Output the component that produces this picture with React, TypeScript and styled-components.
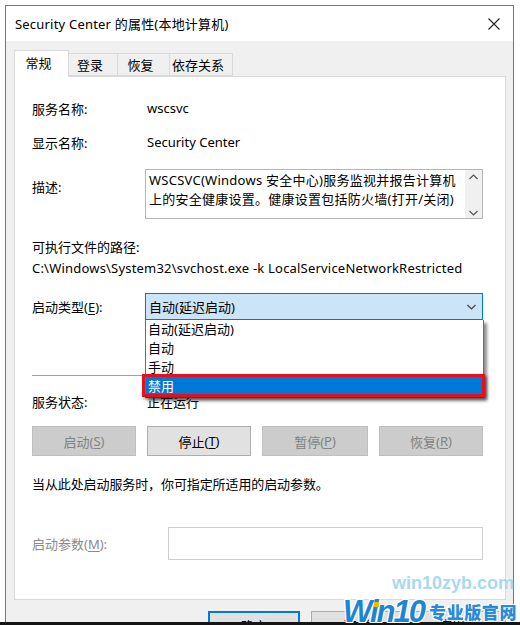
import React from "react";
import styled, { createGlobalStyle } from "styled-components";

const Global = createGlobalStyle`
  html, body { margin: 0; padding: 0; background: #fff; }
  body {
    width: 520px; height: 625px; overflow: hidden;
    font-family: "Noto Sans", "Noto Sans CJK SC", sans-serif;
    font-size: 13px; color: #000;
  }
`;

const Screen = styled.div`
  width: 520px; height: 625px; position: relative; overflow: hidden;
  display: flex; flex-direction: column;
`;

const Frame = styled.div`
  flex: 1; min-height: 0;
  margin: 5px 6px 0 5px;
  border: 1px solid #2f86dd; border-bottom: none;
  background: #f0f0f0;
  display: flex; flex-direction: column; overflow: hidden;
`;

const BottomEdge = styled.div`
  height: 3px; background: #151515; flex: none;
`;

const TitleBar = styled.div`
  height: 35px; flex: none; background: #fff;
  display: flex; align-items: center; justify-content: space-between;
  padding: 0 13px 0 9px;
`;

const TitleText = styled.span`
  font-size: 13px; letter-spacing: 0.2px;
`;

const Body = styled.div`
  padding: 9px 0 0 8px;
  display: flex; flex-direction: column;
`;

const TabStrip = styled.div`
  display: flex; align-items: flex-end; height: 26px; position: relative; z-index: 1;
`;

const Tab = styled.div<{ $active?: boolean; $w: number }>`
  width: ${(p) => p.$w}px;
  height: ${(p) => (p.$active ? 27 : 23)}px;
  box-sizing: border-box;
  border: 1px solid #d9d9d9;
  border-bottom: ${(p) => (p.$active ? "none" : "1px solid #d9d9d9")};
  border-left: ${(p) => (p.$active ? "1px solid #d9d9d9" : "none")};
  margin-bottom: ${(p) => (p.$active ? -1 : 0)}px;
  background: ${(p) => (p.$active ? "#fff" : "#f0f0f0")};
  display: flex; align-items: center; justify-content: center;
  padding-right: 6px; padding-bottom: ${(p) => (p.$active ? 3 : 0)}px;
  font-size: 13px;
`;

const Panel = styled.div`
  width: 492px; height: 524px; box-sizing: border-box;
  border: 1px solid #d9d9d9; background: #fff;
  padding: 22px 22px 0 17px;
  display: flex; flex-direction: column;
`;

const InfoRow = styled.div<{ $mt?: number }>`
  display: flex; align-items: center; height: 18px;
  margin-top: ${(p) => p.$mt ?? 0}px;
`;

const Label = styled.span<{ $w?: number; $disabled?: boolean }>`
  width: ${(p) => p.$w ?? 113}px; flex: none;
  color: ${(p) => (p.$disabled ? "#8a8a8a" : "#000")};
`;

const Value = styled.span`
  padding-left: 2px;
`;

const DescRow = styled.div`
  display: flex; align-items: flex-start; margin-top: 18px;
`;

const DescLabel = styled(Label)`
  padding-top: 8px;
`;

const DescBox = styled.div`
  flex: 1; height: 50px; box-sizing: border-box;
  border: 1px solid #b5b5b5;
  display: flex;
`;

const DescText = styled.div`
  flex: 1; padding: 1px 0 0 3px; line-height: 19px; font-size: 13px;
  letter-spacing: 0.25px; overflow: hidden; white-space: nowrap;
`;

const ScrollCol = styled.div`
  width: 17px; background: #f0f0f0; display: flex; flex-direction: column;
  justify-content: space-between; align-items: center; padding: 4px 0 2px;
`;

const PathLabel = styled.div`
  margin-top: 17px; line-height: 23px;
`;

const PathText = styled.div`
  line-height: 18px; letter-spacing: 0.2px; white-space: nowrap;
`;

const ComboRow = styled.div`
  display: flex; align-items: center; margin-top: 16px;
`;

const ComboWrap = styled.div`
  flex: 1; position: relative; height: 27px;
`;

const Combo = styled.div`
  height: 27px; box-sizing: border-box;
  border: 1px solid #0078d7; background: #cce4f7;
  display: flex; align-items: center; justify-content: space-between;
  padding: 0 6px 0 3px;
`;

const DropList = styled.div`
  position: absolute; left: 0; right: -1px; top: 27px; z-index: 5;
  box-sizing: border-box; border: 1px solid #1e80d8; border-top: none;
  background: #fff;
  box-shadow: 3px 3px 3px rgba(0, 0, 0, 0.45);
  padding-bottom: 1px;
`;

const DropItem = styled.div<{ $sel?: boolean }>`
  height: 19px; line-height: 19px; padding-left: 2px;
  background: ${(p) => (p.$sel ? "#0078d7" : "transparent")};
  color: ${(p) => (p.$sel ? "#fff" : "#000")};
`;

const RedMark = styled.div`
  position: absolute; left: -4px; right: -2px; top: 54px; height: 23px;
  border: 3px solid #e5101c; box-sizing: border-box; pointer-events: none;
  box-shadow: 2px 2px 3px rgba(0, 0, 0, 0.5);
`;

const Separator = styled.div`
  height: 1px; background: #a0a0a0; margin-top: 55px;
`;

const ButtonRow = styled.div`
  display: flex; justify-content: space-between; margin-top: 16px;
`;

const Btn = styled.div<{ $disabled?: boolean; $w?: number }>`
  width: ${(p) => p.$w ?? 104}px; height: 30px; box-sizing: border-box;
  border: 1px solid ${(p) => (p.$disabled ? "#bfbfbf" : "#adadad")};
  background: ${(p) => (p.$disabled ? "#cccccc" : "#e1e1e1")};
  color: ${(p) => (p.$disabled ? "#838383" : "#000")};
  display: flex; align-items: center; justify-content: center;
`;

const Note = styled.div`
  margin-top: 19px; line-height: 18px; letter-spacing: -0.1px;
`;

const ParamRow = styled.div`
  display: flex; align-items: center; margin-top: 34px;
`;

const ParamInput = styled.div`
  flex: 1; height: 33px; box-sizing: border-box; border: 1px solid #cfcfcf;
`;

const Footer = styled.div`
  display: flex; justify-content: flex-end; gap: 11px;
  width: 492px; margin-top: 11px;
`;

const FootBtn = styled.div<{ $primary?: boolean }>`
  width: 92px; height: 24px; box-sizing: border-box;
  border: ${(p) => (p.$primary ? "2px solid #0078d7" : "1px solid #adadad")};
  background: #e1e1e1;
  display: flex; align-items: flex-start; justify-content: center; padding-top: 3px;
`;

const SiteMark = styled.div`
  position: absolute; left: 392px; top: 573px; z-index: 10;
  font-family: "Liberation Sans", Arial, sans-serif; font-weight: bold;
  font-size: 18px; line-height: 21px; color: #a9d9f0;
`;

const LogoMark = styled.div`
  position: absolute; left: 343px; top: 594px; z-index: 10; height: 36px;
  display: flex; align-items: center; gap: 5px;
`;

const LogoWin = styled.span`
  font-family: "Liberation Sans", Arial, sans-serif; font-style: italic; font-weight: bold;
  font-size: 31px; line-height: 36px; letter-spacing: -2px;
  color: #1f84d4;
  text-shadow: 1px 1px 0 #fff, -1px -1px 0 #fff, 1px -1px 0 #fff, -1px 1px 0 #fff;
  position: relative;
`;

const LogoDot = styled.span`
  position: absolute; left: 31px; top: 8px; width: 5px; height: 5px;
  background: #f6b700;
`;

const LogoCn = styled.span`
  font-family: "Noto Sans CJK SC", sans-serif; font-weight: 900;
  font-size: 17px; line-height: 24px; letter-spacing: 0.6px;
  color: #2a8ad8;
  text-shadow: 1px 1px 0 #fff, -1px -1px 0 #fff, 1px -1px 0 #fff, -1px 1px 0 #fff;
`;

const U = styled.span`
  text-decoration: underline; text-underline-offset: 2px;
`;

const CloseIcon = () => (
  <svg width="12" height="12" viewBox="0 0 12 12">
    <path d="M0.5 0.5 L11.5 11.5 M11.5 0.5 L0.5 11.5" stroke="#222" strokeWidth="1.1" fill="none" />
  </svg>
);

const Chevron = ({ up = false, color = "#555" }: { up?: boolean; color?: string }) => (
  <svg width="9" height="6" viewBox="0 0 9 6">
    <path d={up ? "M0.5 5 L4.5 1 L8.5 5" : "M0.5 1 L4.5 5 L8.5 1"} stroke={color} strokeWidth="1.2" fill="none" />
  </svg>
);

export default function App() {
  return (
    <Screen>
      <Global />
      <Frame>
        <TitleBar>
          <TitleText>Security Center 的属性(本地计算机)</TitleText>
          <CloseIcon />
        </TitleBar>
        <Body>
          <TabStrip>
            <Tab $active $w={55}>常规</Tab>
            <Tab $w={49}>登录</Tab>
            <Tab $w={52}>恢复</Tab>
            <Tab $w={63}>依存关系</Tab>
          </TabStrip>
          <Panel>
            <InfoRow>
              <Label>服务名称:</Label>
              <Value>wscsvc</Value>
            </InfoRow>
            <InfoRow $mt={16}>
              <Label>显示名称:</Label>
              <Value>Security Center</Value>
            </InfoRow>
            <DescRow>
              <DescLabel>描述:</DescLabel>
              <DescBox>
                <DescText>
                  WSCSVC(Windows 安全中心)服务监视并报告计算机
                  <br />
                  上的安全健康设置。健康设置包括防火墙(打开/关闭)
                </DescText>
                <ScrollCol>
                  <Chevron up />
                  <Chevron />
                </ScrollCol>
              </DescBox>
            </DescRow>
            <PathLabel>可执行文件的路径:</PathLabel>
            <PathText>C:\Windows\System32\svchost.exe -k LocalServiceNetworkRestricted</PathText>
            <ComboRow>
              <Label>
                启动类型(<U>E</U>):
              </Label>
              <ComboWrap>
                <Combo>
                  <span>自动(延迟启动)</span>
                  <Chevron color="#444" />
                </Combo>
                <DropList>
                  <DropItem>自动(延迟启动)</DropItem>
                  <DropItem>自动</DropItem>
                  <DropItem>手动</DropItem>
                  <DropItem $sel>禁用</DropItem>
                  <RedMark />
                </DropList>
              </ComboWrap>
            </ComboRow>
            <Separator />
            <InfoRow $mt={16}>
              <Label>服务状态:</Label>
              <Value>正在运行</Value>
            </InfoRow>
            <ButtonRow>
              <Btn $disabled>
                启动(<U>S</U>)
              </Btn>
              <Btn>
                停止(<U>T</U>)
              </Btn>
              <Btn $disabled $w={106}>
                暂停(<U>P</U>)
              </Btn>
              <Btn $disabled>
                恢复(<U>R</U>)
              </Btn>
            </ButtonRow>
            <Note>当从此处启动服务时，你可指定所适用的启动参数。</Note>
            <ParamRow>
              <Label $w={136} $disabled>
                启动参数(<U>M</U>):
              </Label>
              <ParamInput />
            </ParamRow>
          </Panel>
          <Footer>
            <FootBtn $primary>确定</FootBtn>
            <FootBtn>取消</FootBtn>
            <FootBtn>应用(A)</FootBtn>
          </Footer>
        </Body>
      </Frame>
      <BottomEdge />
      <SiteMark>win10zyb.com</SiteMark>
      <LogoMark>
        <LogoWin>
          Win10
          <LogoDot />
        </LogoWin>
        <LogoCn>专业版官网</LogoCn>
      </LogoMark>
    </Screen>
  );
}
